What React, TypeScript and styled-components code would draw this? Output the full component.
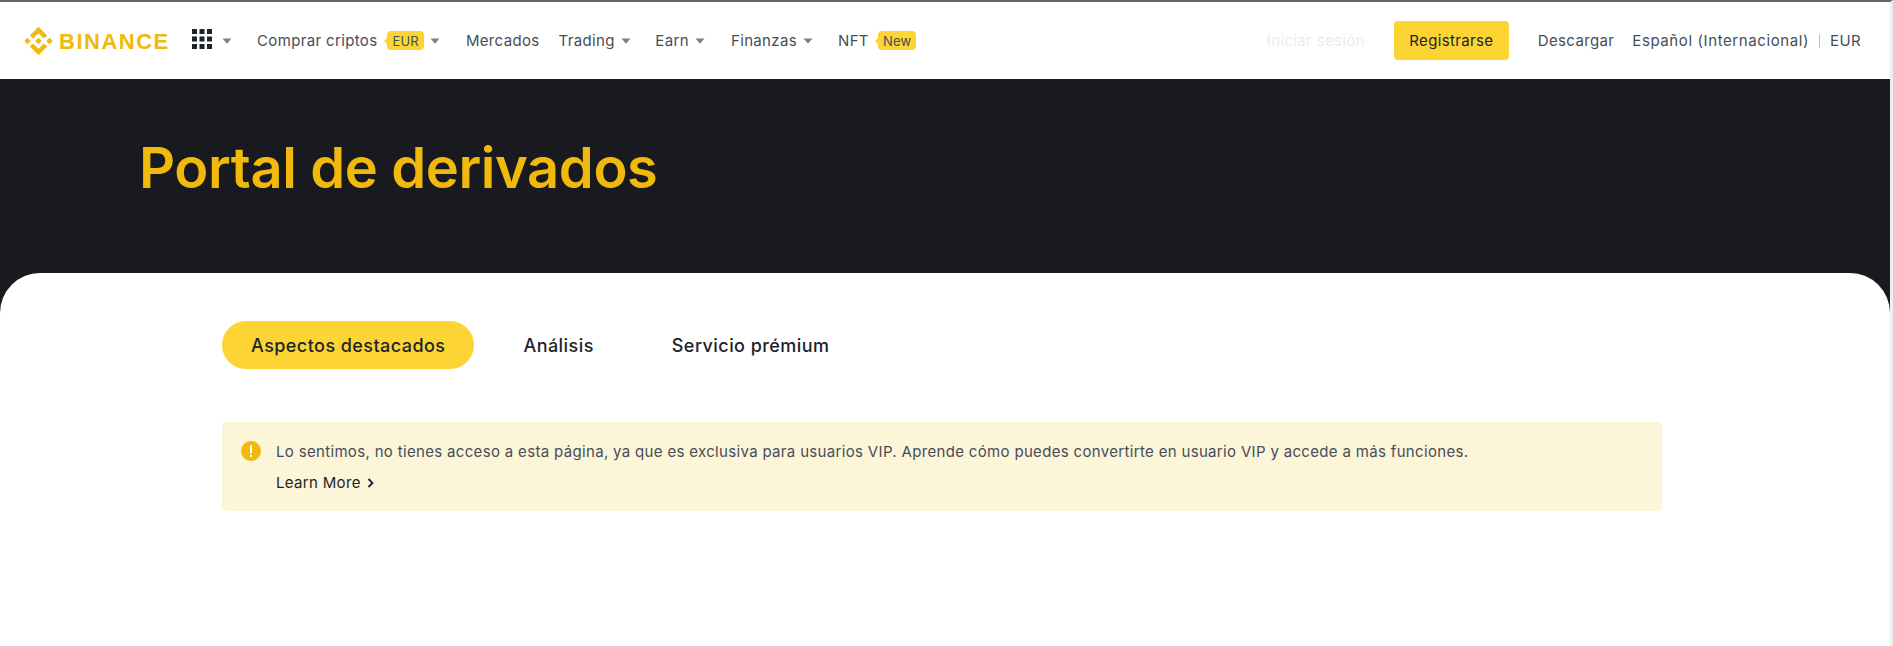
import React from 'react';
import styled, { createGlobalStyle } from 'styled-components';

const Global = createGlobalStyle`
  html, body { margin: 0; padding: 0; background: #fff; }
  body { font-family: "Inter", "Noto Sans", "Liberation Sans", sans-serif; overflow: hidden; }
  * { box-sizing: border-box; }
`;
const Page = styled.div`
  width: 1893px; height: 646px; display: flex; flex-direction: column;
  border-top: 2px solid #666; border-right: 3px solid #eee; overflow: hidden;
`;
const Header = styled.header`
  height: 77px; flex: none; display: flex; align-items: center; padding: 0 29px 0 24px;
  background: #fff; color: #474d57; font-size: 15px; letter-spacing: .35px;
`;
const Logo = styled.svg` width: 145px; height: 30px; flex: none; `;
const Apps = styled.svg` width: 20px; height: 20px; margin: 0 0 4px 23px; flex: none; `;
const Caret = styled.svg<{ $gap?: number }>` width: 10px; height: 6px; margin-left: ${p => p.$gap ?? 6}px; flex: none; `;
const NavItem = styled.span<{ $ml: number }>` display: flex; align-items: center; margin-left: ${p => p.$ml}px; white-space: nowrap; `;
const Tag = styled.span<{ $ml?: number }>`
  position: relative; height: 19px; padding: 0 5px; margin-left: ${p => p.$ml ?? 10}px; display: flex; align-items: center;
  background: #fcd535; border-radius: 4px; font-size: 13px; letter-spacing: .2px; color: #474d57;
  &::before { content: ""; position: absolute; left: -3px; top: 6.5px; border: 3px solid transparent; border-left: 0; border-right-color: #fcd535; }
`;
const Spacer = styled.div` flex: 1; `;
const Login = styled.span` color: #eaecef; `;
const Register = styled.span`
  width: 115px; height: 39px; margin-left: 29px; display: flex; align-items: center; justify-content: center;
  background: #fcd535; border-radius: 4px; color: #1e2329;
`;
const Plain = styled.span<{ $ml: number; $ls?: number }>`
  margin-left: ${p => p.$ml}px; white-space: nowrap; letter-spacing: ${p => p.$ls ?? 0.35}px;
`;
const Sep = styled.span` width: 1px; height: 14px; background: #b7bdc6; margin: 0 10px; `;
const Hero = styled.section`
  height: 244px; flex: none; background: #181a20; padding: 57px 0 0 139px;
`;
const Title = styled.h1`
  margin: 0; font-size: 56px; line-height: 64px; font-weight: 600; color: #f0b90b; letter-spacing: -0.4px;
`;
const Sheet = styled.main`
  flex: 1; margin-top: -50px; background: #fff; border-radius: 40px 40px 0 0; padding: 48px 0 0 222px;
  position: relative;
`;
const Tabs = styled.nav` display: flex; align-items: center; gap: 20px; `;
const Tab = styled.span<{ $active?: boolean }>`
  height: 48px; display: flex; align-items: center; font-size: 18px; font-weight: 500; color: #1e2329; letter-spacing: .44px;
  padding: 0 29px; border-radius: 24px; background: ${p => (p.$active ? '#fcd535' : 'transparent')};
`;
const Alert = styled.div`
  display: flex; gap: 15px; margin-top: 53px; height: 89px; padding: 19px 19px; background: #fdf5d8; border-radius: 4px; width: 1440px;
`;
const AlertIcon = styled.svg` width: 20px; height: 20px; flex: none; `;
const AlertBody = styled.div` font-size: 15px; letter-spacing: .33px; line-height: 22px; color: #474d57; `;
const More = styled.div` display: flex; align-items: center; gap: 6px; margin-top: 9px; color: #1e2329; `;

const CaretIcon = ({ gap }: { gap?: number }) => (
  <Caret $gap={gap} viewBox="0 0 10 6"><path d="M0.5 0.5h9L5.6 5a.8.8 0 0 1-1.2 0z" fill="#76808f" /></Caret>
);

export default function App() {
  return (
    <Page>
      <Global />
      <Header>
        <Logo viewBox="0 0 145 30">
          <g fill="#f0b90b">
            <path d="M9.1 12.6 14.5 7.2l5.4 5.4 3.2-3.2L14.5.8 5.9 9.4z" />
            <path d="M.3 15l3.2-3.2L6.7 15l-3.2 3.2z" />
            <path d="M9.1 17.4l5.4 5.4 5.4-5.4 3.2 3.2-8.6 8.6-8.6-8.6z" />
            <path d="M22.3 15l3.2-3.2 3.2 3.2-3.2 3.2z" />
            <path d="M17.7 15l-3.2-3.2-2.4 2.4-.8.8 3.2 3.2z" />
          </g>
          <text x="35" y="22.5" fontFamily="'Liberation Sans',sans-serif" fontWeight="700" fontSize="22" letterSpacing="1.5" fill="#f0b90b">BINANCE</text>
        </Logo>
        <Apps viewBox="0 0 20 20">
          <g fill="#1e2329">
            {[0, 7.5, 15].flatMap(y => [0, 7.5, 15].map(x => <rect key={`${x}-${y}`} x={x} y={y} width="5" height="5" />))}
          </g>
        </Apps>
        <CaretIcon gap={10} />
        <NavItem $ml={25}>Comprar criptos<Tag>EUR</Tag><CaretIcon /></NavItem>
        <NavItem $ml={26}>Mercados</NavItem>
        <NavItem $ml={19}>Trading<CaretIcon /></NavItem>
        <NavItem $ml={24.5}>Earn<CaretIcon /></NavItem>
        <NavItem $ml={26}>Finanzas<CaretIcon /></NavItem>
        <NavItem $ml={25}>NFT<Tag $ml={9}>New</Tag></NavItem>
        <Spacer />
        <Login>Iniciar sesión</Login>
        <Register>Registrarse</Register>
        <Plain $ml={29}>Descargar</Plain>
        <Plain $ml={18} $ls={0.6}>Español (Internacional)</Plain>
        <Sep />
        <span>EUR</span>
      </Header>
      <Hero><Title>Portal de derivados</Title></Hero>
      <Sheet>
        <Tabs>
          <Tab $active>Aspectos destacados</Tab>
          <Tab>Análisis</Tab>
          <Tab>Servicio prémium</Tab>
        </Tabs>
        <Alert>
          <AlertIcon viewBox="0 0 20 20">
            <circle cx="10" cy="10" r="10" fill="#f0b90b" />
            <rect x="9" y="4" width="2" height="8.5" fill="#fff" />
            <rect x="9" y="14" width="2" height="2" fill="#fff" />
          </AlertIcon>
          <AlertBody>
            Lo sentimos, no tienes acceso a esta página, ya que es exclusiva para usuarios VIP. Aprende cómo puedes convertirte en usuario VIP y accede a más funciones.
            <More>Learn More
              <svg width="7" height="10" viewBox="0 0 7 10"><path d="M1.5 1l4 4-4 4" fill="none" stroke="#1e2329" strokeWidth="1.8" /></svg>
            </More>
          </AlertBody>
        </Alert>
      </Sheet>
    </Page>
  );
}
